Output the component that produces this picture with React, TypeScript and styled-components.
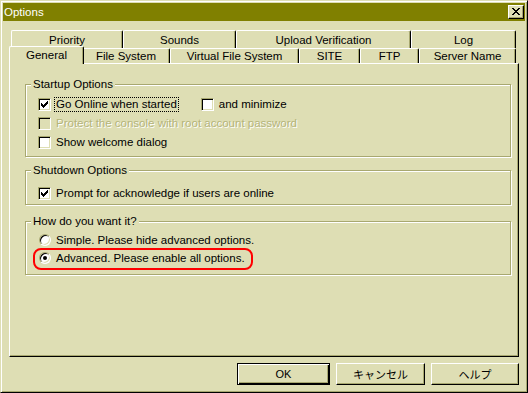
import styled, { createGlobalStyle } from 'styled-components'

const FACE = '#dedeb4'
const SHADOW = '#a8a870'
const TITLE = '#808000'
const FONT = `"Liberation Sans", Arial, "Noto Sans CJK JP", sans-serif`

const GlobalStyle = createGlobalStyle`
  html, body {
    margin: 0;
    padding: 0;
    background: ${FACE};
  }
  body {
    font-family: ${FONT};
    font-size: 11.5px;
    color: #000;
  }
  * {
    box-sizing: border-box;
  }
`

const Window = styled.div`
  width: 528px;
  height: 393px;
  background: ${FACE};
  border: 1px solid;
  border-color: ${FACE} #000 #000 ${FACE};
  box-shadow: inset 1px 1px 0 #fff, inset -1px -1px 0 ${SHADOW};
  padding: 2px;
  display: flex;
  flex-direction: column;
`

const TitleBar = styled.div`
  height: 18px;
  flex: none;
  background: ${TITLE};
  color: #fff;
  display: flex;
  align-items: center;
  justify-content: space-between;
  padding: 0 1px 0 1px;
  line-height: 18px;
`

const CloseButton = styled.div`
  width: 16px;
  height: 14px;
  background: ${FACE};
  border: 1px solid;
  border-color: #fff #000 #000 #fff;
  box-shadow: inset -1px -1px 0 ${SHADOW};
  display: flex;
  align-items: center;
  justify-content: center;
  padding-bottom: 1px;
`

const Content = styled.div`
  flex: 1;
  display: flex;
  flex-direction: column;
  padding: 9px 6px 5px 6px;
`

const TabRow = styled.div<{ $h: number; $front?: boolean }>`
  display: flex;
  height: ${(p) => p.$h}px;
  padding: 0 3px 0 2px;
  position: relative;
  z-index: ${(p) => (p.$front ? 1 : 0)};
`

const Tab = styled.div<{ $w: number; $active?: boolean }>`
  flex: none;
  width: ${(p) => (p.$active ? p.$w + 4 : p.$w)}px;
  height: ${(p) => (p.$active ? '18px' : 'auto')};
  margin: ${(p) => (p.$active ? '-2px -2px 0 -2px' : '0')};
  position: relative;
  z-index: ${(p) => (p.$active ? 2 : 0)};
  background: ${FACE};
  border-left: 1px solid #fff;
  border-top: 1px solid #fff;
  border-right: 1px solid #000;
  border-top-left-radius: 2px;
  border-top-right-radius: 2px;
  box-shadow: inset -1px 0 0 ${SHADOW};
  display: flex;
  align-items: center;
  justify-content: center;
  white-space: nowrap;
  padding-bottom: ${(p) => (p.$active ? 2 : 0)}px;
`

const Panel = styled.div`
  height: 294px;
  flex: none;
  border: 1px solid;
  border-color: #fff #000 #000 #fff;
  box-shadow: inset -1px -1px 0 ${SHADOW};
  padding: 20px 7px 0 15px;
  display: flex;
  flex-direction: column;
`

const Group = styled.div<{ $mt: number; $pb: number }>`
  margin-top: ${(p) => p.$mt}px;
  border: 1px solid ${SHADOW};
  box-shadow: inset 1px 1px 0 #fff, 1px 1px 0 #fff;
  padding-bottom: ${(p) => p.$pb}px;
`

const Legend = styled.div`
  width: fit-content;
  margin: -8px 0 0 5px;
  padding: 0 2px;
  line-height: 14px;
  background: ${FACE};
  position: relative;
`

const Rows = styled.div<{ $pt: number }>`
  padding: ${(p) => p.$pt}px 0 0 12px;
`

const Row = styled.div<{ $h: number }>`
  height: ${(p) => p.$h}px;
  display: flex;
  align-items: center;
  position: relative;
`

const Item = styled.div<{ $gap?: number }>`
  display: flex;
  align-items: center;
  margin-left: ${(p) => p.$gap ?? 0}px;
`

const CheckBox = styled.span<{ $disabled?: boolean }>`
  width: 13px;
  height: 13px;
  flex: none;
  background: ${(p) => (p.$disabled ? FACE : '#fff')};
  border: 1px solid;
  border-color: ${SHADOW} #fff #fff ${SHADOW};
  box-shadow: inset 1px 1px 0 #000, inset -1px -1px 0 ${FACE};
  display: flex;
  align-items: center;
  justify-content: center;
`

const Radio = styled.span`
  width: 12px;
  height: 12px;
  flex: none;
  margin-left: 1px;
  border-radius: 50%;
  background: #fff;
  border: 1px solid;
  border-color: ${SHADOW} #fff #fff ${SHADOW};
  box-shadow: inset 1px 1px 0 #000, inset -1px -1px 0 ${FACE};
  display: flex;
  align-items: center;
  justify-content: center;
`

const Dot = styled.span`
  width: 4px;
  height: 4px;
  border-radius: 50%;
  background: #000;
`

const Label = styled.span<{ $focus?: boolean; $disabled?: boolean }>`
  margin-left: 3px;
  padding: 0 1px;
  border: 1px ${(p) => (p.$focus ? 'dotted #000' : 'solid transparent')};
  line-height: 13px;
  white-space: nowrap;
  color: ${(p) => (p.$disabled ? '#b4b47a' : '#000')};
  text-shadow: ${(p) => (p.$disabled ? '1px 1px 0 #fff' : 'none')};
`

const Highlight = styled.span`
  position: absolute;
  left: -5px;
  top: -1px;
  width: 220px;
  height: 22px;
  border: 2px solid #ff0000;
  border-radius: 8px;
  pointer-events: none;
`

const ButtonBar = styled.div`
  display: flex;
  justify-content: flex-end;
  gap: 6px;
  margin-top: 6px;
`

const Button = styled.div<{ $w: number; $default?: boolean }>`
  width: ${(p) => p.$w}px;
  height: 22px;
  background: ${FACE};
  border: 1px solid;
  border-color: ${(p) => (p.$default ? '#000' : '#fff #000 #000 #fff')};
  box-shadow: ${(p) =>
    p.$default
      ? `inset 1px 1px 0 #fff, inset -1px -1px 0 #000, inset -2px -2px 0 ${SHADOW}`
      : `inset -1px -1px 0 ${SHADOW}`};
  display: flex;
  align-items: center;
  justify-content: center;
  font-family: "Liberation Sans", "Noto Sans CJK JP", sans-serif;
  font-size: 11px;
`

const CHECK = ['......#', '.....##', '#...###', '##.###.', '#####..', '.###...', '..#....']
const CLOSE = ['##....##', '.##..##.', '..####..', '...##...', '..####..', '.##..##.', '##....##']

function PixelGlyph({ rows }: { rows: string[] }) {
  return (
    <svg width={rows[0].length} height={rows.length} shapeRendering="crispEdges">
      {rows.flatMap((r, y) =>
        r.split('').map((c, x) => (c === '#' ? <rect key={`${x}-${y}`} x={x} y={y} width={1} height={1} fill="#000" /> : null))
      )}
    </svg>
  )
}

const backTabs = [
  { label: 'Priority', w: 112 },
  { label: 'Sounds', w: 113 },
  { label: 'Upload Verification', w: 175 },
  { label: 'Log', w: 105 }
]

const frontTabs = [
  { label: 'General', w: 71, active: true },
  { label: 'File System', w: 88 },
  { label: 'Virtual File System', w: 129 },
  { label: 'SITE', w: 61 },
  { label: 'FTP', w: 59 },
  { label: 'Server Name', w: 97 }
]

export default function App() {
  return (
    <>
      <GlobalStyle />
      <Window>
        <TitleBar>
          <span>Options</span>
          <CloseButton>
            <PixelGlyph rows={CLOSE} />
          </CloseButton>
        </TitleBar>

        <Content>
          <TabRow $h={18}>
            {backTabs.map((t) => (
              <Tab key={t.label} $w={t.w}>
                {t.label}
              </Tab>
            ))}
          </TabRow>
          <TabRow $h={15} $front>
            {frontTabs.map((t) => (
              <Tab key={t.label} $w={t.w} $active={t.active}>
                {t.label}
              </Tab>
            ))}
          </TabRow>

          <Panel>
            <Group $mt={0} $pb={4}>
              <Legend>Startup Options</Legend>
              <Rows $pt={4}>
                <Row $h={19}>
                  <Item>
                    <CheckBox>
                      <PixelGlyph rows={CHECK} />
                    </CheckBox>
                    <Label $focus>Go Online when started</Label>
                  </Item>
                  <Item $gap={22}>
                    <CheckBox />
                    <Label>and minimize</Label>
                  </Item>
                </Row>
                <Row $h={19}>
                  <Item>
                    <CheckBox $disabled />
                    <Label $disabled>Protect the console with root account password</Label>
                  </Item>
                </Row>
                <Row $h={19}>
                  <Item>
                    <CheckBox />
                    <Label>Show welcome dialog</Label>
                  </Item>
                </Row>
              </Rows>
            </Group>

            <Group $mt={13} $pb={2}>
              <Legend>Shutdown Options</Legend>
              <Rows $pt={8}>
                <Row $h={17}>
                  <Item>
                    <CheckBox>
                      <PixelGlyph rows={CHECK} />
                    </CheckBox>
                    <Label>Prompt for acknowledge if users are online</Label>
                  </Item>
                </Row>
              </Rows>
            </Group>

            <Group $mt={16} $pb={7}>
              <Legend>How do you want it?</Legend>
              <Rows $pt={3}>
                <Row $h={18}>
                  <Item>
                    <Radio />
                    <Label>Simple. Please hide advanced options.</Label>
                  </Item>
                </Row>
                <Row $h={18}>
                  <Item>
                    <Radio>
                      <Dot />
                    </Radio>
                    <Label>Advanced. Please enable all options.</Label>
                  </Item>
                  <Highlight />
                </Row>
              </Rows>
            </Group>
          </Panel>

          <ButtonBar>
            <Button $w={93} $default>
              OK
            </Button>
            <Button $w={89}>キャンセル</Button>
            <Button $w={88}>ヘルプ</Button>
          </ButtonBar>
        </Content>
      </Window>
    </>
  )
}
